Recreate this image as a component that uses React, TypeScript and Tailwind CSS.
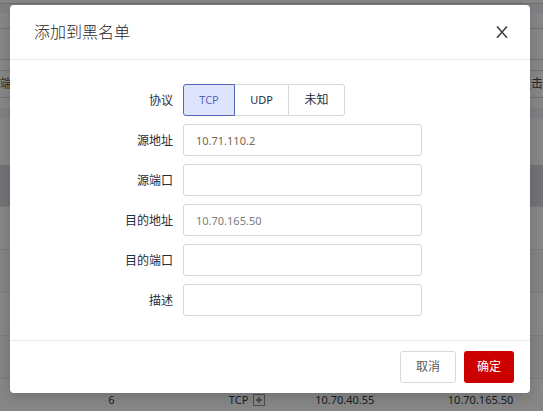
import { useState } from "react";

const protocols = ["TCP", "UDP", "未知"];

const fields = [
  { id: "src-ip", label: "源地址", value: "10.71.110.2", tone: "text-[#7a6550]" },
  { id: "src-port", label: "源端口", value: "", tone: "text-[#666666]" },
  { id: "dst-ip", label: "目的地址", value: "10.70.165.50", tone: "text-[#7c7c7c]" },
  { id: "dst-port", label: "目的端口", value: "", tone: "text-[#666666]" },
  { id: "desc", label: "描述", value: "", tone: "text-[#666666]" },
];

const rows = [
  ["", "", "", ""],
  ["", "", "", ""],
  ["", "", "", ""],
  ["", "", "", ""],
  ["6", "TCP", "10.70.40.55", "10.70.165.50"],
];

function Backdrop() {
  return (
    <div className="h-full overflow-hidden bg-[#e4e8ee]" aria-hidden="true">
      <div className="h-1 border-b border-[#c8c8c8] bg-[#f4f4f4]" />
      <div className="mt-[9px] bg-[#f4f4f4]">
        <div className="h-4 border-b border-[#cccccc]" />
        <div className="h-[31px] border-b border-[#cccccc]" />
        <div className="h-12 pt-[10px]">
          <div className="flex h-7 items-center justify-between border-y border-[#cccccc] text-xs">
            <span className="text-[#6b5024]">端</span>
            <span className="text-[#3c4a58]">攻击</span>
          </div>
        </div>
      </div>
      <div className="mt-[10px] bg-[#f4f4f4]">
        <table className="w-full table-fixed border-collapse text-center text-[11px] text-[#2c3440]">
          <colgroup>
            <col className="w-[41%]" />
            <col className="w-[9%]" />
            <col className="w-[27%]" />
            <col />
          </colgroup>
          <thead>
            <tr className="h-[47px]">
              <th colSpan={4} />
            </tr>
            <tr className="h-[41px] bg-[#d0d0d8]">
              <th colSpan={4} />
            </tr>
          </thead>
          <tbody>
            {rows.map((row, i) => (
              <tr key={i} className="h-[43px] border-t border-[#dedede] odd:bg-[#f4f4f4] even:bg-[#eeeeee]">
                <td>{row[0]}</td>
                <td>
                  {row[1] && (
                    <span className="inline-flex items-center gap-[5px]">
                      {row[1]}
                      <svg width="12" height="12" viewBox="0 0 12 12" fill="none" stroke="#8c8c8c">
                        <rect x=".5" y=".5" width="11" height="11" />
                        <path d="M3 6h6M6 3v6" strokeWidth="2" />
                      </svg>
                    </span>
                  )}
                </td>
                <td>{row[2]}</td>
                <td>{row[3]}</td>
              </tr>
            ))}
          </tbody>
        </table>
      </div>
    </div>
  );
}

export default function App() {
  const [protocol, setProtocol] = useState("TCP");

  return (
    <div className="relative h-screen overflow-hidden font-['Noto_Sans','Noto_Sans_CJK_SC',sans-serif]">
      <Backdrop />
      <div className="absolute inset-0 bg-black/45 pt-[5px] pr-[13px] pl-[10px]">
        <form
          role="dialog"
          aria-labelledby="dialog-title"
          onSubmit={(e) => e.preventDefault()}
          className="rounded bg-white shadow-[0_4px_12px_rgba(0,0,0,0.15)]"
        >
          <header className="flex items-center justify-between border-b border-[#e8e8e8] px-6 py-4">
            <h2 id="dialog-title" className="text-base leading-[22px] font-light text-[#262626]">
              添加到黑名单
            </h2>
            <button type="button" aria-label="关闭" className="-mr-1.5 grid size-5 place-items-center">
              <svg width="12" height="12" viewBox="0 0 12 12" fill="none" stroke="#484848" strokeWidth="1.6">
                <path d="M1 .4l10 11.4M11 .4L1 11.8" />
              </svg>
            </button>
          </header>

          <div className="flex flex-col gap-2 py-6 text-xs text-[#1f2d3d]">
            <div
              role="radiogroup"
              aria-labelledby="protocol-label"
              className="grid grid-cols-[163fr_239fr_98fr] items-center gap-x-[10px]"
            >
              <span id="protocol-label" className="pt-0.5 text-right">
                协议
              </span>
              <div className="grid h-8 grid-cols-[52px_54px_56px]">
                {protocols.map((name) => (
                  <label
                    key={name}
                    className="-ml-px flex items-center justify-center border border-[#d9d9d9] text-[11px] first:ml-0 first:rounded-l-[3px] last:rounded-r-[3px] last:text-xs has-checked:z-10 has-checked:border-[#5667b8] has-checked:bg-[#dfe4fd] has-checked:text-[#5667b8]"
                  >
                    <input
                      type="radio"
                      name="protocol"
                      value={name}
                      checked={protocol === name}
                      onChange={() => setProtocol(name)}
                      className="sr-only"
                    />
                    {name}
                  </label>
                ))}
              </div>
            </div>
            {fields.map((field) => (
              <div key={field.id} className="grid grid-cols-[163fr_239fr_98fr] items-center gap-x-[10px]">
                <label htmlFor={field.id} className="pt-0.5 text-right">
                  {field.label}
                </label>
                <input
                  id={field.id}
                  type="text"
                  defaultValue={field.value}
                  className={`h-8 w-full min-w-0 rounded-[3px] border border-[#d9d9d9] bg-white px-3 text-[11px] outline-none ${field.tone}`}
                />
              </div>
            ))}
          </div>

          <footer className="flex justify-end gap-2 border-t border-[#e8e8e8] px-4 py-[10px] text-xs">
            <button type="button" className="h-8 rounded-[3px] border border-[#d9d9d9] px-[15px] text-[#595959]">
              取消
            </button>
            <button type="submit" className="h-8 rounded-[3px] bg-[#cc0000] px-[13px] text-white">
              确定
            </button>
          </footer>
        </form>
      </div>
    </div>
  );
}
